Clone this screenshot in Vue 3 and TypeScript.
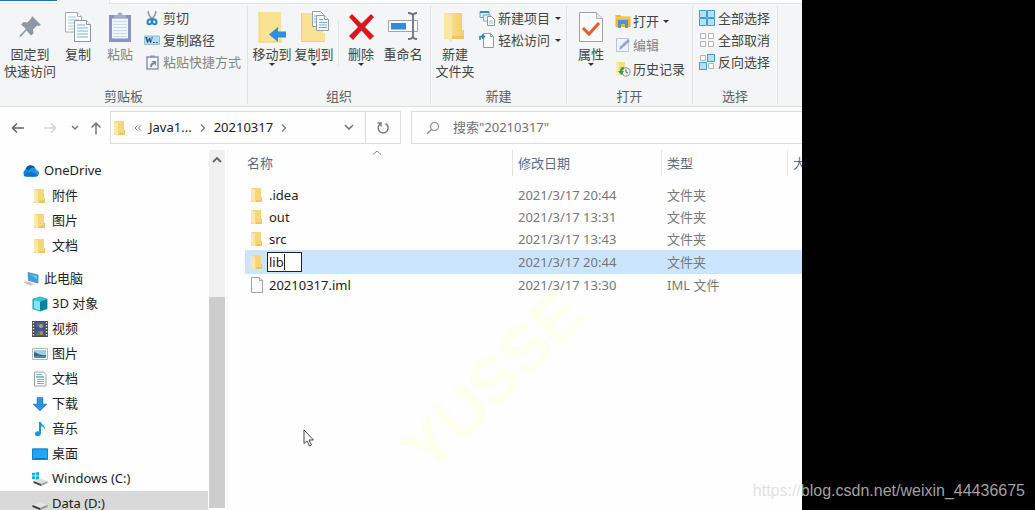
<script setup lang="ts">
import { ref } from 'vue'

interface TreeNode {
  label: string
  icon: string
  root?: boolean
  spaced?: boolean
  selected?: boolean
}

interface FileRow {
  name: string
  icon: string
  date: string
  type: string
  editing?: boolean
}

const tree: TreeNode[] = [
  { label: 'OneDrive', icon: 'cloud', root: true },
  { label: '附件', icon: 'folder' },
  { label: '图片', icon: 'folder' },
  { label: '文档', icon: 'folder' },
  { label: '此电脑', icon: 'pc', root: true, spaced: true },
  { label: '3D 对象', icon: 'cube' },
  { label: '视频', icon: 'video' },
  { label: '图片', icon: 'picture' },
  { label: '文档', icon: 'document' },
  { label: '下载', icon: 'download' },
  { label: '音乐', icon: 'music' },
  { label: '桌面', icon: 'desktop' },
  { label: 'Windows (C:)', icon: 'drive-c' },
  { label: 'Data (D:)', icon: 'drive-d', selected: true },
]

const files: FileRow[] = [
  { name: '.idea', icon: 'folder', date: '2021/3/17 20:44', type: '文件夹' },
  { name: 'out', icon: 'folder', date: '2021/3/17 13:31', type: '文件夹' },
  { name: 'src', icon: 'folder', date: '2021/3/17 13:43', type: '文件夹' },
  { name: 'lib', icon: 'folder', date: '2021/3/17 20:44', type: '文件夹', editing: true },
  { name: '20210317.iml', icon: 'file', date: '2021/3/17 13:30', type: 'IML 文件' },
]

const editName = ref('lib')
const query = ref('')
</script>

<template>
  <div class="page">
    <svg class="sprite" aria-hidden="true">
      <defs>
        <linearGradient id="g-folder" x1="0" x2="1"><stop offset="0" stop-color="#fbe6a0" /><stop offset="1" stop-color="#f3cc67" /></linearGradient>
        <linearGradient id="g-blue" x1="0" y1="0" x2="1" y2="1"><stop offset="0" stop-color="#1b9df0" /><stop offset="1" stop-color="#22aef8" /></linearGradient>
      </defs>
      <symbol id="folder" viewBox="0 0 16 16">
        <path d="M2 1h10v9h1v5H2z" fill="#f5d67c" /><path d="M2 1l4 2v12.500l-4-1.500z" fill="#fbe7a6" /><path d="M12 10h1v5H7v-2h5z" fill="#efc65d" />
      </symbol>
      <symbol id="file" viewBox="0 0 16 16">
        <path d="M2.500.5h8l3 3v12h-11z" fill="#fafafa" stroke="#a2a2a2" /><path d="M10.500.5v3h3" fill="#e8e8e8" stroke="#a2a2a2" />
      </symbol>
      <symbol id="cloud" viewBox="0 0 18 14">
        <path d="M3.500 6a5.200 5.200 0 0 1 9.500-2.500L9 8z" fill="#0a55a8" />
        <path d="M4 12.500A3.800 3.800 0 0 1 3.500 5.500c2-.6 3.500.2 5 1.500l4 5.500z" fill="#1482d4" />
        <path d="M7 6.500C9 3 12.500 2.500 14.500 6a3.400 3.400 0 0 1 .2 6.500H4.500z" fill="#1c94e6" />
        <path d="M1.500 11.500L9 7.500l7 4c-.5.700-1 1-1.800 1H4c-1.100 0-2-.300-2.500-1z" fill="#0f6fc4" />
      </symbol>
      <symbol id="pc" viewBox="0 0 18 16">
        <path d="M6 1.500l10 2.500v8l-9.500-2.500z" fill="#3b9fe0" stroke="#4b8db8" stroke-width=".8" /><path d="M7 3l8 2v3z" fill="#6fc6f5" />
        <path d="M1 11.500l5-1.500 7 3.500-4.500 1.500z" fill="#d9dcde" /><path d="M3 11.700l3-.8 4.500 2.200-2.500.8z" fill="#bbbfc2" />
      </symbol>
      <symbol id="cube" viewBox="0 0 16 16">
        <path d="M0.500 3L8 .5 15.500 3v10L8 15.500.5 13z" fill="#18a5bd" /><path d="M2 4L8 5.500v9L2 12.500z" fill="#85e4ed" /><path d="M8 5.500L15 3.500v9L8 15z" fill="#0785a3" /><path d="M1 3l7-2 7 2-7 2.500z" fill="#39c3d6" />
      </symbol>
      <symbol id="video" viewBox="0 0 16 16">
        <path d="M0 0h16v16H0z" fill="#4a4a4a" /><path d="M3.500 1h9v6.500h-9z" fill="#3863ac" /><path d="M3.500 8.500h9V15h-9z" fill="#3863ac" />
        <path d="M1.500 1v14M14.500 1v14" stroke="#e7e7e7" stroke-width="1.500" stroke-dasharray="1.500 1.500" /><circle cx="9" cy="5" r="2" fill="#a8b342" /><circle cx="6" cy="4" r="1" fill="#c35430" /><circle cx="9" cy="12" r="2" fill="#d08236" /><path d="M4 13l3-2 2 3H4z" fill="#568353" />
      </symbol>
      <symbol id="picture" viewBox="0 0 16 16">
        <path d="M.5 2.500h15v11H.5z" fill="#fff" stroke="#b2b7ba" /><path d="M2 4h12v8H2z" fill="#9cd1ee" /><path d="M2 6c4 1 6 4 12 3v3H2z" fill="#34657c" /><path d="M2 10c4-1 8 1 12 0v2H2z" fill="#578ba8" />
      </symbol>
      <symbol id="document" viewBox="0 0 16 16">
        <path d="M2.500 1h9l2.500 2.500V15h-11.500z" fill="#fff" stroke="#95a1a8" /><path d="M4 3.500h6M5 8.500h7M5 10.500h7M5 12.500h7" stroke="#72b5d4" /><path d="M4 5h8v2H4z" fill="#7fbfdc" />
      </symbol>
      <symbol id="download" viewBox="0 0 16 16"><path d="M5 1.500h6V8h4l-7 7-7-7h4z" fill="#318fe0" stroke="#287cc6" stroke-width=".5" /></symbol>
      <symbol id="music" viewBox="0 0 16 16"><path d="M7 1h2c.5 3 4.500 3.500 4 8-1-3-2.500-3.500-4-4v7c0 4-6 4-6 1 0-2 2-3 4-2.500z" fill="#1793df" /></symbol>
      <symbol id="desktop" viewBox="0 0 16 16"><path d="M0 2.500h16v11.500H0z" fill="url(#g-blue)" /><path d="M.5 3h15v10.500H.5z" fill="none" stroke="#1784c5" /><path d="M2 12.500h12" stroke="#1272aa" /></symbol>
      <symbol id="drive-c" viewBox="0 0 16 16">
        <path d="M0 2l3-.4v3H0zM3.700 1.500L7 1v3.600H3.700zM0 5.300h3v3L0 8zM3.700 5.300H7V9l-3.300-.5z" fill="#19a9df" /><path d="M1.500 10L8 7.500l7.500 2.500-6.500 3z" fill="#dedede" /><path d="M1.500 10v2L9 15v-2z" fill="#434343" /><path d="M9 13l6.500-3v2L9 15z" fill="#9c9c9c" />
      </symbol>
      <symbol id="drive-d" viewBox="0 0 16 16">
        <path d="M.5 9L8 6.500 15.500 9 8 12z" fill="#e4e4e4" /><path d="M.5 9v2L8 14v-2z" fill="#383838" /><path d="M8 12l7.500-3v2L8 14z" fill="#929292" />
      </symbol>
      <symbol id="pin" viewBox="0 0 32 32"><path d="M18 5l9 9-2.500 1-1.500-.5-4 4 .5 4-2.500 2-4.500-5-5.500 6-1.500.5.5-2 6-6-5-4.500 2.500-2.500 4 .5 4-4.500z" fill="#8e99a4" /></symbol>
      <symbol id="copy" viewBox="0 0 32 32">
        <g fill="#fdfeff" stroke="#a3abb2"><path d="M3.500 1.500h12l4 4v15.500h-16z" /><path d="M15.500 1.500v4h4" /></g><path d="M6 6h8M6 9h11M6 12h11M6 15h11M6 18h11" stroke="#9dc8e8" />
        <g fill="#fdfeff" stroke="#8d969f"><path d="M12.500 9.500h12l4 4v17h-16z" /><path d="M24.500 9.500v4h4" /></g><path d="M15 14h8M15 17h11M15 20h11M15 23h11M15 26h11" stroke="#76afdf" />
      </symbol>
      <symbol id="paste" viewBox="0 0 32 32">
        <path d="M5 4h22v27H5z" fill="#8794bf" /><path d="M8 7.500h16v20H8z" fill="#eff6fd" /><path d="M9 10.500h14M9 13.500h14M9 16.500h14M9 19.500h14M9 22.500h14M9 25.500h14" stroke="#c8daed" /><path d="M10 7V4h3.500a2.500 2.500 0 0 1 5 0H22v3z" fill="#a5afc9" />
      </symbol>
      <symbol id="cut" viewBox="0 0 16 16"><path d="M4 1l1 4 4.500 6M12 1l-1 4-4.500 6" fill="none" stroke="#8e99a3" stroke-width="1.500" /><path d="M8 9c-2.500 0-4.500 1-4.500 3a2 2 0 0 0 4 .5L8 11l.5 1.500a2 2 0 0 0 4-.5c0-2-2-3-4.500-3" fill="none" stroke="#2384ca" stroke-width="2" /></symbol>
      <symbol id="path" viewBox="0 0 16 16"><path d="M.5 4h15v8.500H.5z" fill="#b7dcf6" stroke="#8abfe2" /><text x="1" y="11" font-family="Liberation Serif, serif" font-size="8" font-weight="bold" fill="#173650">W</text><path d="M9 10.500h1.500M12 10.500h1.500" stroke="#173650" /></symbol>
      <symbol id="shortcut" viewBox="0 0 16 16"><path d="M3 3h11v12H3z" fill="#f6faff" stroke="#8794bb" stroke-width="1.500" /><path d="M6 3.500V1.500h5v2z" fill="#8794bb" /><path d="M6 13c0-3 1-4 3-4.500L7.500 7H12v4.500L10.500 10C9 10.500 8 11.500 8 13z" fill="#7886b2" /></symbol>
      <symbol id="move" viewBox="0 0 32 32"><path d="M3 1h22v20h1v10H3z" fill="#fae294" /><path d="M3 1v30h23" fill="none" stroke="#f3d06b" /><path d="M30 20.500v6h-8V31l-9-7.500 9-7.500v4.500z" fill="#318ede" /></symbol>
      <symbol id="copyto" viewBox="0 0 32 32"><path d="M3 2h22v20h2v9H3z" fill="#fae294" /><path d="M3.500 2v28.500h23" fill="none" stroke="#f0cf72" /><g fill="#f9fcff" stroke="#8e9faf"><path d="M14.500.5h8l3 3v12h-11z" /><path d="M18.500 4.500h8l4 4v11h-12z" /><path d="M26.500 4.500v4h4" /></g><path d="M16 5h2M16 8h2M16 11h2M21 8.500h4M21 11.500h8M21 14h8M21 16.500h8" stroke="#6eacdf" /></symbol>
      <symbol id="delete" viewBox="0 0 32 32"><path d="M4 6l3-3 9.500 9.500L26 3l3 3-9 10 9 9-4 4-8.500-9.500L8 29l-4-4 9-9z" fill="#dc1620" /></symbol>
      <symbol id="rename" viewBox="0 0 32 32"><path d="M1.500 9.500h29v11h-29z" fill="#fcfdfe" stroke="#9da4aa" /><path d="M4 12h15v6.500H4z" fill="#2f8ddc" /><path d="M21 2c3 0 5 .5 5 3 0-2.500 2-3 4-3M26 5v20M21 28c3 0 5-.5 5-3 0 2.500 2 3 4 3" fill="none" stroke="#6a747c" stroke-width="1.800" /></symbol>
      <symbol id="newfolder" viewBox="0 0 32 32"><path d="M5 2h18v17h2v9H5z" fill="url(#g-folder)" /><path d="M5 2l8 4v25l-8-5z" fill="#fbe6a3" /><path d="M13 25h12v3H13z" fill="#edc260" /></symbol>
      <symbol id="newitem" viewBox="0 0 16 16"><path d="M1 1.500h9v6H1z" fill="#d4edf9" stroke="#6fa6ca" /><path d="M1 2h9" stroke="#3d8abc" stroke-width="2" /><path d="M4.500 5h7v6h-7z" fill="#eef5f9" stroke="#97a6b2" /><path d="M8.500 6.500h4l3 3v6h-7z" fill="#fff" stroke="#8c98a3" /><path d="M10 11h4M10 13h4" stroke="#9bb4c7" /></symbol>
      <symbol id="access" viewBox="0 0 16 16"><path d="M4.500 1.500h7l3 3v11h-10z" fill="#fff" stroke="#8f9aa2" /><path d="M11.500 1.500v3h3" fill="none" stroke="#8f9aa2" /><path d="M1 8V4.500h3.500M3 2.500l2.500 2L3 6.500" fill="none" stroke="#2384c4" stroke-width="1.500" /></symbol>
      <symbol id="props" viewBox="0 0 32 32"><path d="M4.500 1.500h17l6 6v23h-23z" fill="#fafafa" stroke="#a2a2a2" /><path d="M21.500 1.500v6h6" fill="#e7e7e7" stroke="#b1b1b1" /><path d="M8 17l6 6L24 12" fill="none" stroke="#e85b28" stroke-width="3" /></symbol>
      <symbol id="open" viewBox="0 0 16 16"><path d="M.5 2h5l1 1.500h9V14H.5z" fill="#f2b62f" /><path d="M.5 5h15" stroke="#ffd76d" /><path d="M3 15V7h10v8h-3v-4H6v4z" fill="#4898d4" /></symbol>
      <symbol id="edit" viewBox="0 0 16 16"><path d="M1.500 1.500h12v13h-12z" fill="#eef3fc" stroke="#b9c3dc" /><path d="M4 13l1-3.500L13 2l2 2-8 7.500z" fill="#9aa7ca" /></symbol>
      <symbol id="history" viewBox="0 0 16 16"><path d="M1 1h9v13H1z" fill="#f8db83" /><path d="M1 1l3 2v12l-3-1z" fill="#ffebab" /><circle cx="11" cy="11" r="4.200" fill="#ecefec" stroke="#8b958f" /><path d="M11 8.500V11l2 1" fill="none" stroke="#58605b" /><path d="M9 6c-3 0-4 2-4 4H3l3.500 4L9 10H7c0-1 .5-2 2-2z" fill="#2b9f45" /></symbol>
      <symbol id="select-all" viewBox="0 0 16 16"><path d="M.5.5h7v7h-7zM8.500.5h7v7h-7zM.5 8.500h7v7h-7zM8.500 8.500h7v7h-7z" fill="#b6dff8" stroke="#3e9dd8" /></symbol>
      <symbol id="select-none" viewBox="0 0 16 16"><path d="M1.500 1.500h5v5h-5zM9.500 1.500h5v5h-5zM1.500 9.500h5v5h-5zM9.500 9.500h5v5h-5z" fill="#fff" stroke="#b5b5b5" /></symbol>
      <symbol id="select-invert" viewBox="0 0 16 16"><path d="M1.500 1.500h5v5h-5zM9.500 9.500h5v5h-5z" fill="#fff" stroke="#b5b5b5" /><path d="M8.500.5h7v7h-7zM.5 8.500h7v7h-7z" fill="#b6dff8" stroke="#3e9dd8" /></symbol>
    </svg>

    <main class="window">
      <div class="tabs"><span class="tab-file"></span><span class="tab-home"></span></div>

      <div class="ribbon">
        <section class="group clipboard">
          <div class="tools">
            <button class="big wide"><svg><use href="#pin" /></svg><span>固定到<br />快速访问</span></button>
            <button class="big slim"><svg><use href="#copy" /></svg><span>复制</span></button>
            <button class="big muted paste"><svg><use href="#paste" /></svg><span>粘贴</span></button>
            <div class="stack">
              <button class="small"><svg><use href="#cut" /></svg>剪切</button>
              <button class="small"><svg><use href="#path" /></svg>复制路径</button>
              <button class="small muted"><svg><use href="#shortcut" /></svg>粘贴快捷方式</button>
            </div>
          </div>
          <h2>剪贴板</h2>
        </section>

        <section class="group organize">
          <div class="tools">
            <button class="big mid"><svg><use href="#move" /></svg><span>移动到</span><i class="tri"></i></button>
            <button class="big mid"><svg><use href="#copyto" /></svg><span>复制到</span><i class="tri"></i></button>
            <i class="rule"></i>
            <button class="big mid"><svg><use href="#delete" /></svg><span>删除</span><i class="tri"></i></button>
            <button class="big mid"><svg><use href="#rename" /></svg><span>重命名</span></button>
          </div>
          <h2>组织</h2>
        </section>

        <section class="group create">
          <div class="tools">
            <button class="big"><svg><use href="#newfolder" /></svg><span>新建<br />文件夹</span></button>
            <div class="stack">
              <button class="small"><svg><use href="#newitem" /></svg>新建项目<i class="tri"></i></button>
              <button class="small"><svg><use href="#access" /></svg>轻松访问<i class="tri"></i></button>
            </div>
          </div>
          <h2>新建</h2>
        </section>

        <section class="group open">
          <div class="tools">
            <button class="big"><svg><use href="#props" /></svg><span>属性</span><i class="tri"></i></button>
            <div class="stack loose">
              <button class="small"><svg><use href="#open" /></svg>打开<i class="tri"></i></button>
              <button class="small muted"><svg><use href="#edit" /></svg>编辑</button>
              <button class="small"><svg><use href="#history" /></svg>历史记录</button>
            </div>
          </div>
          <h2>打开</h2>
        </section>

        <section class="group select">
          <div class="tools">
            <div class="stack">
              <button class="small"><svg><use href="#select-all" /></svg>全部选择</button>
              <button class="small"><svg><use href="#select-none" /></svg>全部取消</button>
              <button class="small"><svg><use href="#select-invert" /></svg>反向选择</button>
            </div>
          </div>
          <h2>选择</h2>
        </section>
      </div>

      <nav class="navbar">
        <div class="history">
          <button class="back" aria-label="后退"><svg width="14" height="12" viewBox="0 0 14 12"><path d="M13 6H1.500M6 1.500L1.500 6 6 10.500" stroke="#666" stroke-width="1.500" /></svg></button>
          <button class="forward" aria-label="前进"><svg width="14" height="12" viewBox="0 0 14 12"><path d="M1 6h11.500M8 1.500L12.500 6 8 10.500" stroke="#d4d4d4" stroke-width="1.500" /></svg></button>
          <button aria-label="最近位置"><svg width="8" height="6" viewBox="0 0 8 6"><path d="M1 1l3 3 3-3" stroke="#777" stroke-width="1.500" /></svg></button>
          <button aria-label="上移"><svg width="12" height="14" viewBox="0 0 12 14"><path d="M6 13.500V2M1.500 6.500L6 2l4.500 4.500" stroke="#777" stroke-width="1.500" /></svg></button>
        </div>
        <div class="address">
          <svg class="icon"><use href="#folder" /></svg>
          <button class="more" aria-label="更多"><svg width="8" height="6" viewBox="0 0 8 6"><path d="M3.500.5L1 3l2.500 2.500M7 .5L4.500 3 7 5.500" stroke="#777" /></svg></button>
          <button class="crumb">Java1...</button>
          <svg width="6" height="8" viewBox="0 0 6 8"><path d="M1 .5L4.500 4 1 7.500" stroke="#777" stroke-width="1.300" /></svg>
          <button class="crumb">20210317</button>
          <svg width="6" height="8" viewBox="0 0 6 8"><path d="M1 .5L4.500 4 1 7.500" stroke="#777" stroke-width="1.300" /></svg>
          <button class="expand" aria-label="历史位置"><svg width="10" height="7" viewBox="0 0 10 7"><path d="M1 1l4 4 4-4" stroke="#777" stroke-width="1.700" /></svg></button>
          <button class="refresh" aria-label="刷新"><svg width="14" height="14" viewBox="0 0 14 14"><path d="M9.500 2.500A5 5 0 1 1 4 3M1.500 2h3.500v3.500" stroke="#7b7b7b" stroke-width="1.500" /></svg></button>
        </div>
        <label class="search">
          <svg width="14" height="14" viewBox="0 0 14 14"><circle cx="8.500" cy="5.500" r="4" stroke="#888" stroke-width="1.200" /><path d="M5.500 8.500L1 13" stroke="#888" stroke-width="1.200" /></svg>
          <input v-model="query" type="search" placeholder='搜索"20210317"' aria-label="搜索" />
        </label>
      </nav>

      <div class="content">
        <ul class="tree">
          <li v-for="(node, i) in tree" :key="i" :class="{ root: node.root, spaced: node.spaced, selected: node.selected }">
            <button><svg class="icon"><use :href="'#' + node.icon" /></svg>{{ node.label }}</button>
          </li>
        </ul>
        <div class="scrollbar">
          <button aria-label="向上滚动"><svg width="10" height="7" viewBox="0 0 10 7"><path d="M1 6l4-4 4 4" stroke="#666" stroke-width="1.800" /></svg></button>
          <div class="thumb"></div>
        </div>

        <div class="files">
          <svg class="sort" width="10" height="5" viewBox="0 0 10 5"><path d="M1 4.500l4-3.500 4 3.500" stroke="#888" /></svg>
          <table>
            <colgroup><col class="c-name" /><col class="c-date" /><col class="c-type" /><col /></colgroup>
            <thead>
              <tr><th><div>名称</div></th><th><div>修改日期</div></th><th><div>类型</div></th><th><div>大小</div></th></tr>
            </thead>
            <tbody>
              <tr v-for="file in files" :key="file.name" :class="{ editing: file.editing }">
                <td class="name">
                  <div>
                    <svg class="icon"><use :href="'#' + file.icon" /></svg>
                    <span v-if="file.editing" class="editor"><input v-model="editName" aria-label="文件名" /><i class="caret"></i></span>
                    <span v-else>{{ file.name }}</span>
                  </div>
                </td>
                <td>{{ file.date }}</td>
                <td>{{ file.type }}</td>
                <td></td>
              </tr>
            </tbody>
          </table>
          <div class="stamp">YUSSE</div>
          <svg class="pointer" width="12" height="18" viewBox="0 0 12 18"><path d="M1 1v13.500l3-2.500 2.500 5 2-1-2.500-5h4.500z" fill="#fff" stroke="#444" /></svg>
        </div>
      </div>
    </main>
    <span class="credit">https://blog.csdn.net/weixin_44436675</span>
  </div>
</template>

<style>
body {
  margin: 0;
  background: #000;
}
</style>

<style scoped>
* {
  box-sizing: border-box;
}
.page {
  position: relative;
  display: grid;
  grid-template-columns: minmax(0, 1fr) 233px;
  height: 100vh;
  overflow: hidden;
  background: #000;
  color: #222;
  font: 13px/17px "Noto Sans", "Noto Sans CJK SC", sans-serif;
}
.sprite {
  position: absolute;
  width: 0;
  height: 0;
}
svg {
  flex: none;
  fill: none;
}
button {
  padding: 0;
  border: 0;
  background: none;
  color: inherit;
  font: inherit;
  white-space: nowrap;
}
input {
  min-width: 0;
  padding: 0;
  border: 0;
  outline: 0;
  background: none;
  color: inherit;
  font: inherit;
}
.icon {
  width: 16px;
  height: 16px;
}
.window {
  display: flex;
  flex-direction: column;
  height: 100vh;
  overflow: hidden;
  background: #fefefe;
}
.tabs {
  display: flex;
  flex: none;
  height: 4px;
  border-bottom: 1px solid #e2e4e5;
}
.tab-file {
  width: 57px;
  height: 1px;
  background: #1b70b8;
}
.tab-home {
  width: 53px;
  height: 4px;
  background: #f3f5f6;
  border-right: 1px solid #e2e4e5;
}
.ribbon {
  display: flex;
  flex: none;
  height: 103px;
  background: #f3f5f6;
  border-bottom: 1px solid #dcdfe0;
}
.group {
  display: flex;
  flex: none;
  flex-direction: column;
  margin: 2px 0;
  border-right: 1px solid #e0e3e4;
  color: #444;
}
.group h2 {
  margin: 0;
  color: #606060;
  font-size: 13px;
  font-weight: 400;
  line-height: 16px;
  text-align: center;
}
.clipboard {
  width: 248px;
}
.organize {
  width: 183px;
}
.create {
  width: 136px;
}
.open {
  width: 126px;
}
.select {
  width: 85px;
}
.tools {
  display: flex;
  flex: 1;
}
.big {
  display: flex;
  flex-direction: column;
  align-items: center;
  width: 48px;
  padding-top: 5px;
}
.big svg {
  width: 32px;
  height: 32px;
  margin-bottom: 3px;
}
.big.wide {
  width: 60px;
}
.big.slim {
  width: 36px;
}
.big.mid {
  width: 42px;
}
.organize .tools {
  padding-left: 3px;
}
.rule {
  width: 1px;
  height: 46px;
  margin: 14px 1px 0 3px;
  background: #e3e5e6;
}
.muted {
  color: #858585;
}
.tri {
  width: 0;
  border: 3px solid transparent;
  border-top-color: #333;
  border-bottom: 0;
}
.stack {
  display: flex;
  flex-direction: column;
  align-items: flex-start;
  padding-top: 1px;
}
.small {
  display: flex;
  align-items: center;
  gap: 3px;
  height: 22px;
}
.small svg {
  width: 16px;
  height: 16px;
}
.small .tri {
  margin-left: 2px;
}
.loose {
  padding-top: 3px;
}
.loose .small {
  gap: 2px;
  height: 24px;
}
.select .stack {
  padding-left: 6px;
}
.navbar {
  display: flex;
  flex: none;
  align-items: center;
  height: 43px;
  padding-bottom: 2px;
}
.navbar button {
  display: flex;
  align-items: center;
}
.history {
  display: flex;
  flex: none;
  align-items: center;
  gap: 11px;
  width: 110px;
  padding-left: 11px;
}
.back {
  margin-right: 7px;
}
.forward {
  margin-right: 3px;
}
.address {
  display: flex;
  flex: none;
  align-items: center;
  width: 291px;
  height: 33px;
  padding-left: 1px;
  border: 1px solid #dcdcdc;
}
.more {
  margin: 0 7px 0 6px;
}
.crumb {
  margin-right: 8px;
}
.crumb + svg + .crumb {
  margin-left: 8px;
}
.expand {
  margin-left: auto;
  margin-right: 11px;
}
.refresh {
  justify-content: center;
  width: 35px;
  height: 31px;
  border-left: 1px solid #dcdcdc;
}
.search {
  display: flex;
  flex: 1;
  align-items: center;
  gap: 13px;
  min-width: 0;
  height: 33px;
  margin-left: 10px;
  padding-left: 14px;
  border: 1px solid #dcdcdc;
  border-right: 0;
}
.search input {
  flex: 1;
}
.search input::placeholder {
  color: #707070;
  opacity: 1;
}
.content {
  display: flex;
  flex: 1;
  min-height: 0;
}
.tree {
  flex: none;
  width: 208px;
  margin: 0;
  padding: 8px 0 0;
  overflow: hidden;
  list-style: none;
}
.tree li {
  padding-left: 32px;
}
.tree button {
  display: flex;
  align-items: center;
  gap: 4px;
  height: 25px;
}
.tree .root {
  padding-left: 22px;
}
.tree .root .icon {
  width: 18px;
}
.tree .spaced {
  padding-top: 8px;
}
.tree .selected {
  background: #d9d9d9;
}
.scrollbar {
  display: flex;
  flex: none;
  flex-direction: column;
  width: 16px;
  margin: 0 2px 2px 1px;
  background: #f0f0f0;
}
.scrollbar button {
  display: flex;
  align-items: center;
  justify-content: center;
  height: 18px;
}
.thumb {
  height: 59%;
  margin-top: auto;
  background: #cdcdcd;
}
.files {
  position: relative;
  flex: 1;
  min-width: 0;
  padding-left: 17px;
  border-left: 1px solid #f5f5f5;
  overflow: hidden;
}
.sort {
  position: absolute;
  top: 0;
  left: 144px;
}
table {
  position: relative;
  z-index: 1;
  width: 100%;
  border-collapse: collapse;
  table-layout: fixed;
}
.c-name {
  width: 267px;
}
.c-date {
  width: 149px;
}
.c-type {
  width: 126px;
}
th {
  padding: 0 0 8px;
  color: #5a6b85;
  font-weight: 400;
  text-align: left;
}
th div {
  height: 26px;
  padding-left: 5px;
  border-left: 1px solid #e5e5e5;
  line-height: 26px;
  overflow: hidden;
  white-space: nowrap;
}
th:first-child div {
  padding-left: 2px;
  border-left: 0;
}
td {
  height: 22px;
  padding: 0 0 0 6px;
  color: #777;
  white-space: nowrap;
}
.name {
  padding-left: 4px;
  color: #222;
}
.name div {
  display: flex;
  align-items: center;
  gap: 4px;
}
.editing td {
  height: 24px;
  background: #cce5ff;
}
.editor {
  position: relative;
  display: flex;
  margin-left: -2px;
}
.editor input {
  width: 35px;
  height: 20px;
  padding-left: 1px;
  border: 1px solid #222;
  background: #fff;
}
.caret {
  position: absolute;
  top: 2px;
  left: 17px;
  width: 1px;
  height: 16px;
  background: #222;
}
.stamp {
  position: absolute;
  top: 231px;
  left: 265px;
  translate: -50% -50%;
  rotate: -45deg;
  color: #ffffed;
  font: bold 66px/1 "Liberation Sans", sans-serif;
  text-shadow: 0 0 1px #e2fbf4;
}
.pointer {
  position: absolute;
  top: 279px;
  left: 75px;
}
.credit {
  position: absolute;
  right: 10px;
  bottom: 10px;
  z-index: 2;
  color: rgba(216, 216, 216, 0.76);
  font: 16px/18px "Liberation Sans", sans-serif;
}
</style>
